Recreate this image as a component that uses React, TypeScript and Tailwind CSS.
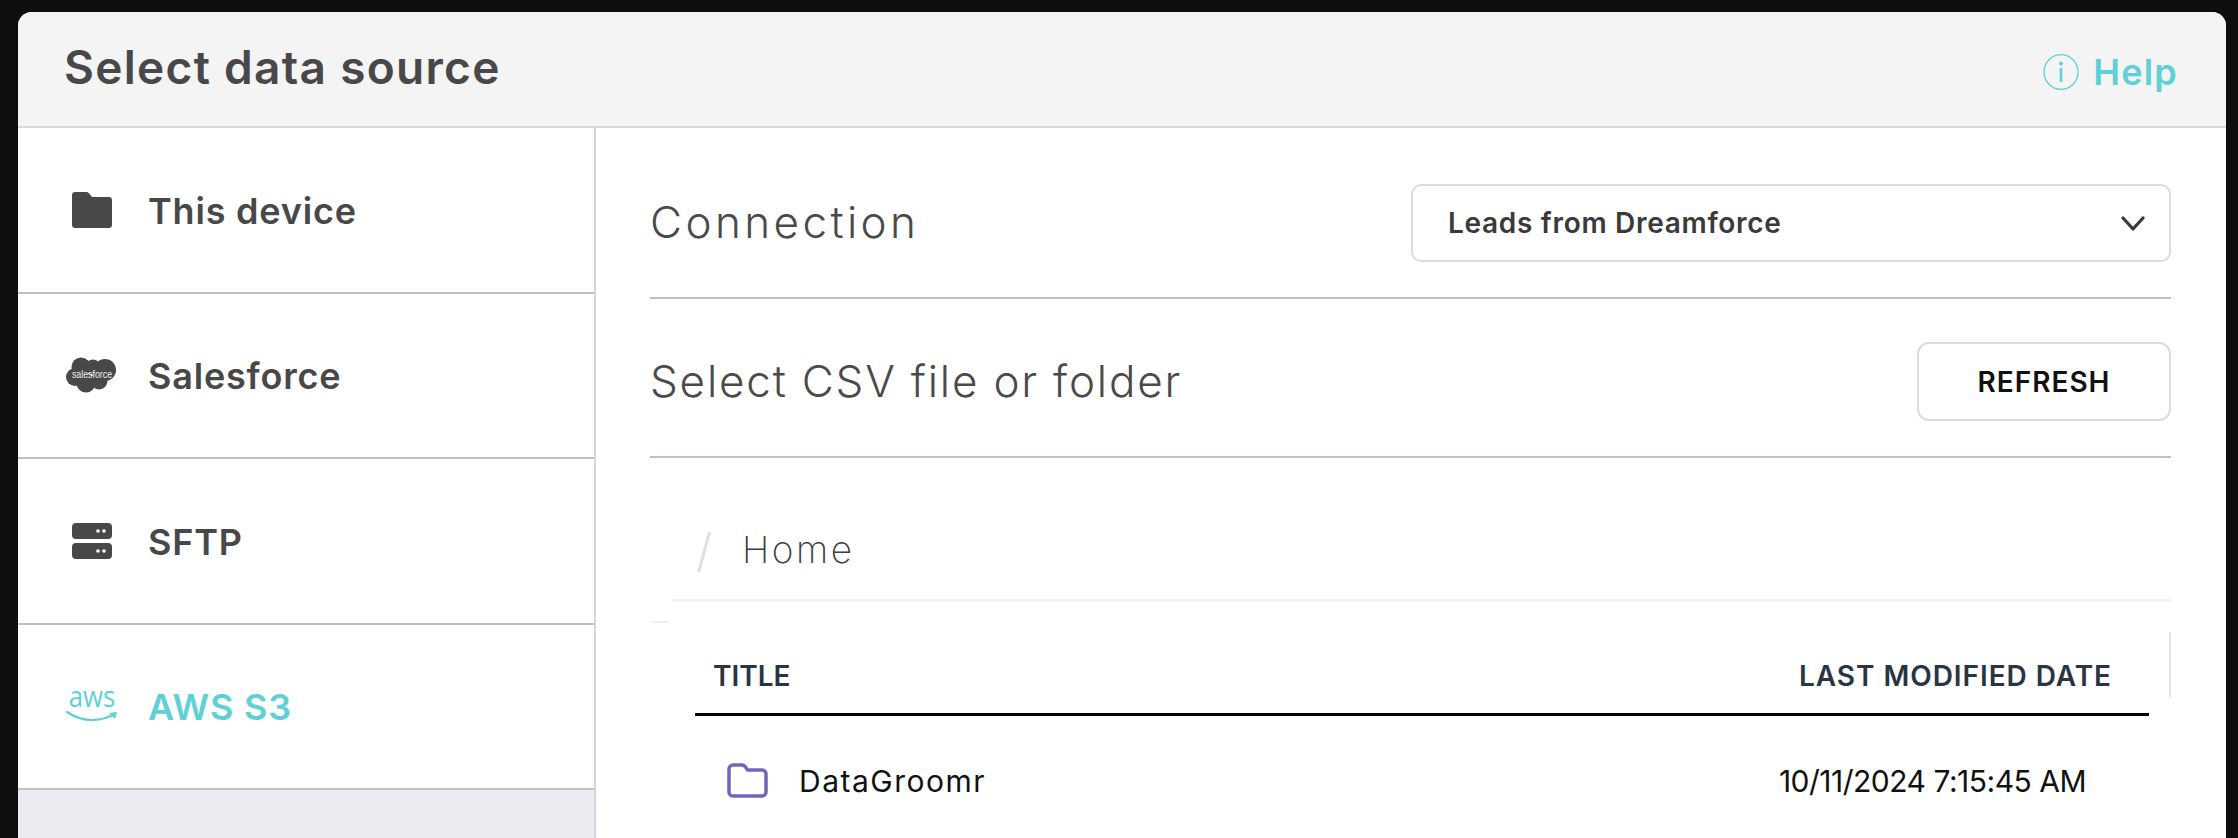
import React from 'react';

function FolderSolid() {
  return (
    <svg width="40" height="36" viewBox="0 0 40 36" className="shrink-0">
      <path d="M3 0h11c1.500 0 2.500.6 3.300 1.600L20 5h17c1.700 0 3 1.300 3 3v25c0 1.700-1.300 3-3 3H3c-1.700 0-3-1.300-3-3V3c0-1.700 1.300-3 3-3z" fill="#484848" />
    </svg>
  );
}

function SalesforceLogo() {
  return (
    <svg width="52" height="36" viewBox="0 0 52 36" className="shrink-0">
      <g fill="#484848">
        <circle cx="15" cy="10" r="9.500" />
        <circle cx="27" cy="10" r="7.500" />
        <circle cx="39" cy="13" r="11" />
        <circle cx="9" cy="20" r="9" />
        <circle cx="20" cy="26" r="9.500" />
        <circle cx="33" cy="24" r="8.500" />
      </g>
      <text transform="translate(26 21) scale(0.88 1)" textAnchor="middle" fontSize="10" fill="#f0f0f0" fontFamily="'Liberation Sans', sans-serif">salesforce</text>
    </svg>
  );
}

function ServerIcon() {
  return (
    <svg width="40" height="36" viewBox="0 0 40 36" className="shrink-0">
      <rect x="0" y="0" width="40" height="16" rx="4" fill="#484848" />
      <rect x="0" y="20" width="40" height="16" rx="4" fill="#484848" />
      <circle cx="26" cy="8" r="1.800" fill="#fff" />
      <circle cx="32" cy="8" r="1.800" fill="#fff" />
      <circle cx="26" cy="28" r="1.800" fill="#fff" />
      <circle cx="32" cy="28" r="1.800" fill="#fff" />
    </svg>
  );
}

function AwsLogo() {
  return (
    <svg width="52" height="65" viewBox="0 -16 52 65" className="shrink-0">
      <text transform="translate(26 17) scale(0.86 1)" textAnchor="middle" fontSize="30" fill="#5fd0d6" fontFamily="'Open Sans', sans-serif">aws</text>
      <path d="M1 22c8 5.500 16 8 25 8 8 0 15-2 21-5" fill="none" stroke="#5fd0d6" strokeWidth="2.200" strokeLinecap="round" />
      <path d="M43 23l8-1-2 7z" fill="#5fd0d6" />
    </svg>
  );
}

function SourceRow({ icon, label, active }: { icon: React.ReactNode; label: string; active?: boolean }) {
  return (
    <div className="h-[165.500px] flex items-center border-b-2 border-[#bcc0c8] bg-white">
      <div className="w-[130px] flex justify-center pl-[18px] shrink-0">{icon}</div>
      <span className={`mt-[2px] text-[36px] font-semibold tracking-[0.800px] ${active ? 'text-[#5fd0d6]' : 'text-[#484848]'}`}>{label}</span>
    </div>
  );
}

export default function App() {
  return (
    <div className="h-[838px] overflow-hidden bg-[#0e0e0e] pt-3 pl-[18px] pr-3 font-['Inter',sans-serif]">
      <div className="h-full rounded-t-[14px] overflow-hidden bg-white flex flex-col">
        <header className="h-[116px] shrink-0 bg-[#f4f4f4] border-b-2 border-[#d9d9d9] flex items-center justify-between pl-[46px] pr-[48px]">
          <h1 className="text-[46px] font-semibold text-[#484848] tracking-[1.300px] mt-[-4px]">Select data source</h1>
          <div className="flex items-center gap-[14px] text-[#5fd0d6] mt-[6px]">
            <svg width="36" height="36" viewBox="0 0 36 36">
              <ellipse cx="18" cy="18" rx="17" ry="17.300" fill="none" stroke="#5fd0d6" strokeWidth="1.300" />
              <circle cx="18" cy="9.500" r="2" fill="#5fd0d6" />
              <rect x="16.700" y="14" width="2.600" height="14" fill="#5fd0d6" />
            </svg>
            <span className="text-[36px] font-semibold tracking-[1.200px]">Help</span>
          </div>
        </header>

        <div className="flex flex-1 min-h-0">
          <aside className="w-[578px] shrink-0 bg-[#ebecf1] border-r-2 border-[#d4d6da]">
            <SourceRow icon={<FolderSolid />} label="This device" />
            <SourceRow icon={<SalesforceLogo />} label="Salesforce" />
            <SourceRow icon={<ServerIcon />} label="SFTP" />
            <SourceRow icon={<AwsLogo />} label="AWS S3" active />
          </aside>

          <main className="flex-1 min-w-0 pl-[54px] pr-[55px]">
            <section className="flex items-center justify-between pt-[56px] pb-[35px] border-b-2 border-[#bcc0c8]">
              <h2 className="text-[44px] font-light text-[#4a4a4a] tracking-[3.400px] mt-[-2px]">Connection</h2>
              <button className="w-[760px] h-[78px] rounded-[10px] border-2 border-[#dcdcdc] bg-white flex items-center justify-between pl-[35px] pr-[24px] text-[28px] font-semibold text-[#3a3a3a] tracking-[0.700px]">
                <span>Leads from Dreamforce</span>
                <svg width="24" height="24" viewBox="0 0 24 24" fill="none" stroke="#3a3a3a" strokeWidth="3.200" strokeLinecap="round" strokeLinejoin="round">
                  <path d="M2 7l10 11L22 7" />
                </svg>
              </button>
            </section>

            <section className="flex items-center justify-between pt-[43px] pb-[35px] border-b-2 border-[#bcc0c8]">
              <h2 className="text-[44px] font-light text-[#4a4a4a] tracking-[1.800px] mt-[-2px]">Select CSV file or folder</h2>
              <button className="w-[254px] h-[79px] rounded-[12px] border-2 border-[#dcdcdc] bg-white text-[28px] font-semibold text-[#111] tracking-[1px]">REFRESH</button>
            </section>

            <nav className="ml-[22px] h-[144px] border-b-[3px] border-[#f3f3f3] flex items-center gap-[30px] pl-[24px] pt-[42px]">
              <span className="text-[46px] font-light text-[#dedede] leading-none">/</span>
              <span className="text-[37px] font-extralight text-[#3c3c3c] tracking-[2.500px]">Home</span>
            </nav>
            <div className="w-[18px] h-[2px] bg-[#f0f0f0] mt-[19px]" />

            <div className="relative">
              <div className="absolute right-0 top-[9px] h-[66px] w-[2px] bg-[#e6e6e6]" />
              <div className="ml-[45px] mr-[22px] h-[93px] border-b-[3px] border-black flex items-end justify-between pb-[23px] pl-[18px] pr-[37px] text-[28px] font-semibold text-[#2a3444] leading-none">
                <span>TITLE</span>
                <span className="tracking-[0.950px]">LAST MODIFIED DATE</span>
              </div>
              <div className="ml-[45px] mr-[22px] flex items-center justify-between pt-[47px] pl-[32px] pr-[63px] text-[30px] text-[#111] leading-none">
                <div className="flex items-center gap-[31px]">
                  <svg width="41" height="35" viewBox="0 0 41 35" fill="none" stroke="#7165bd" strokeWidth="3.500" strokeLinejoin="round">
                    <path d="M2 6c0-2.300 1.700-4 4-4h9c1.500 0 2.400.6 3.200 1.600L20.500 7H35c2.300 0 4 1.700 4 4v18c0 2.300-1.700 4-4 4H6c-2.300 0-4-1.700-4-4z" />
                  </svg>
                  <span className="tracking-[1.500px]">DataGroomr</span>
                </div>
                <span className="tracking-[-0.500px]">10/11/2024 7:15:45 AM</span>
              </div>
            </div>
          </main>
        </div>
      </div>
    </div>
  );
}
